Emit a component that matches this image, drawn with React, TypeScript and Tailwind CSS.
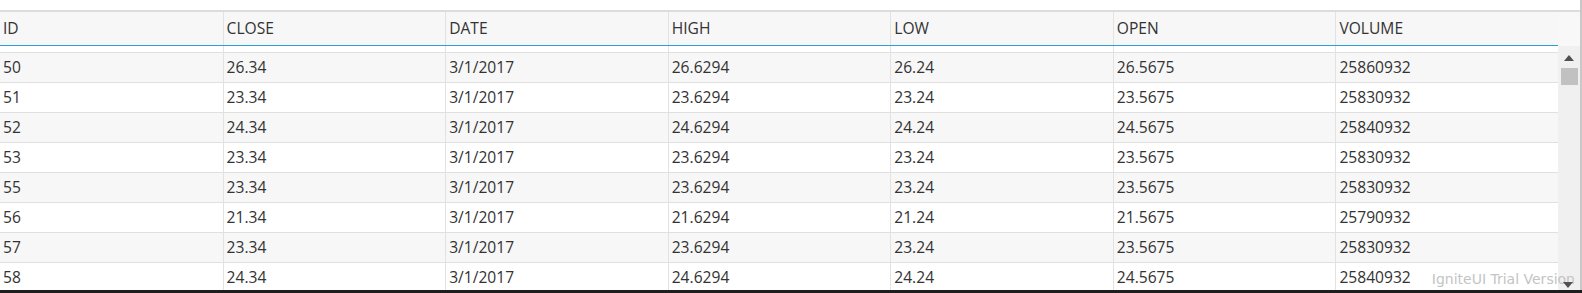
const columns = ["ID", "CLOSE", "DATE", "HIGH", "LOW", "OPEN", "VOLUME"];

const rows = [
  ["50", "26.34", "3/1/2017", "26.6294", "26.24", "26.5675", "25860932"],
  ["51", "23.34", "3/1/2017", "23.6294", "23.24", "23.5675", "25830932"],
  ["52", "24.34", "3/1/2017", "24.6294", "24.24", "24.5675", "25840932"],
  ["53", "23.34", "3/1/2017", "23.6294", "23.24", "23.5675", "25830932"],
  ["55", "23.34", "3/1/2017", "23.6294", "23.24", "23.5675", "25830932"],
  ["56", "21.34", "3/1/2017", "21.6294", "21.24", "21.5675", "25790932"],
  ["57", "23.34", "3/1/2017", "23.6294", "23.24", "23.5675", "25830932"],
  ["58", "24.34", "3/1/2017", "24.6294", "24.24", "24.5675", "25840932"],
];

const App = () => {
  return (
    <div
      className="relative flex h-[293px] w-[1582px] flex-col overflow-hidden bg-white text-[15.6px] text-[#333]"
      style={{ fontFamily: "'Open Sans', 'Noto Sans', sans-serif" }}
    >
      <div className="flex min-h-0 flex-1">
        <div className="flex w-[1580px] flex-col">
          <div className="h-[10px] shrink-0 bg-white" />
          <div className="h-[2px] shrink-0 bg-[#dcdcdc]" />
          <div className="flex min-h-0 flex-1">
            {/* grid */}
            <div className="flex w-[1558px] flex-col overflow-hidden">
              <div className="grid h-[33px] shrink-0 grid-cols-7 bg-[#f7f7f7]">
                {columns.map((c, i) => (
                  <div
                    key={c}
                    className={`flex items-center pt-px pl-[3px] ${i > 0 ? "border-l border-[#e2e2e2]" : ""}`}
                  >
                    {c}
                  </div>
                ))}
              </div>
              <div className="h-px shrink-0 bg-[#2a9fd6]" />
              <div className="grid h-[6px] shrink-0 grid-cols-7 bg-white">
                {columns.map((c, i) => (
                  <div key={c} className={i > 0 ? "border-l border-[#e2e2e2]" : ""} />
                ))}
              </div>
              <div className="shrink-0 border-t border-[#e0e0e0]">
                {rows.map((r, ri) => (
                  <div
                    key={r[0]}
                    className={`grid h-[30px] grid-cols-7 border-b border-[#e0e0e0] ${
                      ri % 2 === 0 ? "bg-[#f7f7f7]" : "bg-white"
                    }`}
                  >
                    {r.map((v, i) => (
                      <div
                        key={i}
                        className={`flex items-center pl-[3px] ${i > 0 ? "border-l border-[#e2e2e2]" : ""}`}
                      >
                        {v}
                      </div>
                    ))}
                  </div>
                ))}
              </div>
            </div>
            {/* scrollbar */}
            <div className="flex w-[22px] flex-col">
              <div className="h-[34px] shrink-0 bg-[#f8f8f8]" />
              <div className="relative flex flex-1 flex-col items-center bg-[#f0f0f0]">
                <svg width="10" height="6" viewBox="0 0 10 6" className="mt-[9px]">
                  <path d="M5 0 L10 6 L0 6 Z" fill="#505050" />
                </svg>
                <div className="mt-[7px] h-[17px] w-[17px] bg-[#c1c1c1]" />
                <svg width="10" height="6" viewBox="0 0 10 6" className="absolute bottom-[2px] left-[5px] z-10">
                  <path d="M0 0 L10 0 L5 6 Z" fill="#505050" />
                </svg>
              </div>
            </div>
          </div>
        </div>
        <div className="w-[2px] bg-[#c8c8c8]" />
      </div>
      <div className="h-[3px] shrink-0 bg-[#1e1e1e]" />
      <div
        className="absolute bottom-[7px] right-[7px] text-[14px] leading-none text-[#c4c4c4]"
        style={{ fontFamily: "'DejaVu Sans', Verdana, sans-serif" }}
      >
        IgniteUI Trial Version
      </div>
    </div>
  );
};

export default App;
